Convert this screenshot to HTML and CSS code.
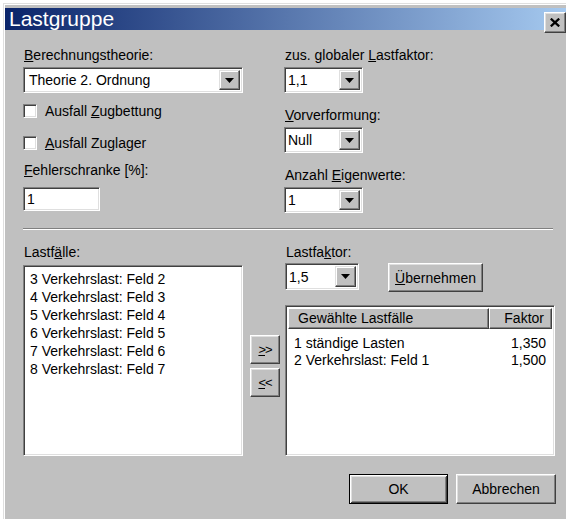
FILE: index.html
```html
<!DOCTYPE html>
<html lang="de">
<head>
<meta charset="utf-8">
<title>Lastgruppe</title>
<link rel="stylesheet" href="styles.css">
</head>
<body>
<div class="window">
  <div class="titlebar">
    <span class="title">Lastgruppe</span>
    <button class="close" aria-label="Schließen">
      <svg width="10" height="9" viewBox="0 0 10 9"><path d="M0.8 0.6 L9.2 8.4 M9.2 0.6 L0.8 8.4" stroke="#000" stroke-width="2.2" fill="none"/></svg>
    </button>
  </div>

  <div class="client">
    <div class="top">
      <div class="col-left">
        <div class="lbl"><u>B</u>erechnungstheorie:</div>
        <div class="combo combo-wide">
          <span class="combo-text">Theorie 2. Ordnung</span>
          <span class="drop"><svg width="9" height="5" viewBox="0 0 9 5"><path d="M0 0 H9 L4.5 5 Z" fill="#000"/></svg></span>
        </div>
        <div class="check check-first"><span class="box"></span><span>Ausfall <u>Z</u>ugbettung</span></div>
        <div class="check check-second"><span class="box"></span><span><u>A</u>usfall Zuglager</span></div>
        <div class="lbl lbl-error"><u>F</u>ehlerschranke [%]:</div>
        <div class="field field-error">1</div>
      </div>

      <div class="col-right">
        <div class="lbl">zus. globaler <u>L</u>astfaktor:</div>
        <div class="combo combo-small">
          <span class="combo-text">1,1</span>
          <span class="drop"><svg width="9" height="5" viewBox="0 0 9 5"><path d="M0 0 H9 L4.5 5 Z" fill="#000"/></svg></span>
        </div>
        <div class="lbl lbl-next"><u>V</u>orverformung:</div>
        <div class="combo combo-small">
          <span class="combo-text">Null</span>
          <span class="drop"><svg width="9" height="5" viewBox="0 0 9 5"><path d="M0 0 H9 L4.5 5 Z" fill="#000"/></svg></span>
        </div>
        <div class="lbl lbl-next">Anzahl <u>E</u>igenwerte:</div>
        <div class="combo combo-small">
          <span class="combo-text">1</span>
          <span class="drop"><svg width="9" height="5" viewBox="0 0 9 5"><path d="M0 0 H9 L4.5 5 Z" fill="#000"/></svg></span>
        </div>
      </div>
    </div>

    <div class="separator"></div>

    <div class="bottom">
      <div class="col-cases">
        <div class="lbl">Lastf<u>ä</u>lle:</div>
        <div class="listbox">
          <div class="item">3 Verkehrslast: Feld 2</div>
          <div class="item">4 Verkehrslast: Feld 3</div>
          <div class="item">5 Verkehrslast: Feld 4</div>
          <div class="item">6 Verkehrslast: Feld 5</div>
          <div class="item">7 Verkehrslast: Feld 6</div>
          <div class="item">8 Verkehrslast: Feld 7</div>
        </div>
      </div>

      <div class="col-move">
        <button class="btn btn-move"><u>&gt;</u>&gt;</button>
        <button class="btn btn-move btn-move-back"><u>&lt;</u>&lt;</button>
      </div>

      <div class="col-selected">
        <div class="lbl">Lastfa<u>k</u>tor:</div>
        <div class="factor-row">
          <div class="combo combo-factor">
            <span class="combo-text">1,5</span>
            <span class="drop"><svg width="9" height="5" viewBox="0 0 9 5"><path d="M0 0 H9 L4.5 5 Z" fill="#000"/></svg></span>
          </div>
          <button class="btn btn-apply"><u>Ü</u>bernehmen</button>
        </div>
        <div class="listview">
          <div class="lv-header">
            <div class="lv-col lv-col-name">Gewählte Lastfälle</div>
            <div class="lv-col lv-col-factor">Faktor</div>
          </div>
          <div class="lv-rows">
            <div class="lv-row"><span>1 ständige Lasten</span><span>1,350</span></div>
            <div class="lv-row"><span>2 Verkehrslast: Feld 1</span><span>1,500</span></div>
          </div>
        </div>
      </div>
    </div>

    <div class="footer">
      <button class="btn btn-dialog btn-default">OK</button>
      <button class="btn btn-dialog">Abbrechen</button>
    </div>
  </div>
</div>
</body>
</html>
```

FILE: styles.css
```css
html, body {
  margin: 0;
  padding: 0;
  background: #fff;
  overflow: hidden;
}

body {
  width: 566px;
  height: 520px;
  font-family: "Liberation Sans", Arial, sans-serif;
  font-size: 14px;
  color: #000;
}

u {
  text-decoration: underline;
  text-underline-offset: 1px;
}

/* dialog frame */
.window {
  box-sizing: border-box;
  width: 566px;
  height: 516px;
  margin: 3px 0 0 3px;
  padding: 4px 0 0 1px;
  background: #c0c0c0;
  border-top: 1px solid #dfdfdf;
  border-left: 1px solid #dfdfdf;
  box-shadow: inset 1px 1px #fff;
}

.titlebar {
  display: flex;
  align-items: flex-start;
  height: 22px;
  background: linear-gradient(to right, #0a246a, #a6caf0);
  color: #fff;
}

.title {
  padding-left: 4px;
  font-size: 21px;
  line-height: 22px;
}

.close {
  box-sizing: border-box;
  display: flex;
  align-items: center;
  justify-content: center;
  width: 22px;
  height: 21px;
  margin: 4px 3px -3px auto;
  padding: 0;
  background: #c0c0c0;
  border: 1px solid;
  border-color: #fff #404040 #404040 #fff;
  box-shadow: inset -1px -1px #808080, inset 1px 1px #dfdfdf;
}

/* client area */
.client {
  width: 533px;
  padding: 17px 0 0 18px;
}

.lbl {
  height: 16px;
  padding-left: 1px;
  line-height: 16px;
  white-space: nowrap;
}

.top {
  display: flex;
}

.col-left {
  display: flex;
  flex-direction: column;
  width: 261px;
}

.col-right {
  display: flex;
  flex-direction: column;
}

/* sunken 3D field */
.combo,
.field,
.listbox,
.listview,
.box {
  box-sizing: border-box;
  background: #fff;
  border: 1px solid;
  border-color: #808080 #fff #fff #808080;
  box-shadow: inset 1px 1px #404040, inset -1px -1px #dfdfdf;
}

.combo {
  display: flex;
  align-items: center;
  height: 26px;
  margin-top: 4px;
  padding: 2px 2px 2px 2px;
}

.combo-text {
  flex: 1;
  padding-left: 1px;
  white-space: nowrap;
}

.combo-wide {
  width: 220px;
}

.combo-wide .combo-text {
  padding-left: 3px;
}

.combo-small {
  width: 79px;
}

.combo-factor {
  width: 74px;
  height: 27px;
  margin-top: 0;
}

.drop {
  box-sizing: border-box;
  display: flex;
  align-items: center;
  justify-content: center;
  width: 21px;
  height: 100%;
  background: #c0c0c0;
  border: 1px solid;
  border-color: #dfdfdf #404040 #404040 #dfdfdf;
  box-shadow: inset -1px -1px #808080, inset 1px 1px #fff;
}

.check {
  display: flex;
  align-items: center;
  gap: 8px;
  height: 24px;
  white-space: nowrap;
}

.check-first {
  margin-top: 6px;
}

.check-second {
  margin-top: 8px;
}

.box {
  width: 14px;
  height: 14px;
}

.lbl-error {
  margin-top: 7px;
}

.field {
  height: 24px;
  line-height: 20px;
  padding: 1px 3px;
}

.field-error {
  width: 77px;
  margin-top: 9px;
}

.lbl-next {
  margin-top: 14px;
}

.separator {
  width: 530px;
  margin-top: 15px;
  border-top: 1px solid #808080;
  border-bottom: 1px solid #fff;
}

/* lower half */
.bottom {
  display: flex;
  padding-top: 14px;
}

.col-cases {
  width: 220px;
}

.listbox {
  height: 191px;
  margin-top: 5px;
  padding: 4px 6px;
}

.item {
  height: 18px;
  line-height: 18px;
  white-space: nowrap;
}

.col-move {
  display: flex;
  flex-direction: column;
  width: 30px;
  margin-left: 7px;
  padding-top: 91px;
}

.btn {
  box-sizing: border-box;
  padding: 0;
  background: #c0c0c0;
  font-family: "Liberation Sans", Arial, sans-serif;
  font-size: 14px;
  color: #000;
  border: 1px solid;
  border-color: #fff #404040 #404040 #fff;
  box-shadow: inset -1px -1px #808080, inset 1px 1px #dfdfdf;
}

.btn-move {
  width: 30px;
  height: 29px;
  font-size: 13px;
  letter-spacing: -1px;
}

.btn-move-back {
  margin-top: 4px;
}

.col-selected {
  width: 270px;
  margin-left: 5px;
}

.factor-row {
  display: flex;
  align-items: flex-start;
  margin-top: 3px;
}

.btn-apply {
  width: 95px;
  height: 29px;
  margin-left: 29px;
}

.listview {
  height: 151px;
  margin-top: 13px;
  padding: 2px;
}

.lv-header {
  display: flex;
  height: 21px;
}

.lv-col {
  box-sizing: border-box;
  height: 21px;
  line-height: 19px;
  background: #c0c0c0;
  border: 1px solid;
  border-color: #fff #404040 #404040 #fff;
  box-shadow: inset -1px -1px #808080;
  white-space: nowrap;
}

.lv-col-name {
  width: 201px;
  padding-left: 9px;
}

.lv-col-factor {
  flex: 1;
  padding-right: 7px;
  text-align: right;
}

.lv-rows {
  padding: 6px 6px 0 6px;
}

.lv-row {
  display: flex;
  justify-content: space-between;
  height: 17px;
  line-height: 17px;
  white-space: nowrap;
}

.footer {
  display: flex;
  justify-content: flex-end;
  gap: 8px;
  margin-top: 18px;
}

.btn-dialog {
  width: 100px;
  height: 30px;
}

.btn-default {
  width: 99px;
  border: 1px solid #000;
  box-shadow: inset 1px 1px #fff, inset -1px -1px #404040, inset 2px 2px #dfdfdf, inset -2px -2px #808080;
}
```
